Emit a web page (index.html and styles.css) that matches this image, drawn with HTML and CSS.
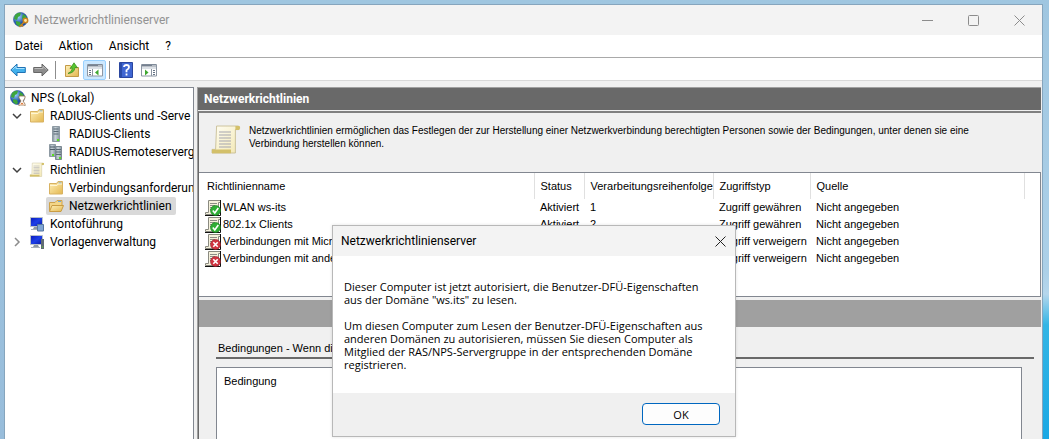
FILE: index.html
```html
<!DOCTYPE html>
<html lang="de">
<head>
<meta charset="utf-8">
<title>Netzwerkrichtlinienserver</title>
<link rel="stylesheet" href="styles.css">
</head>
<body>
<svg class="defs" aria-hidden="true">
  <defs>
    <linearGradient id="gold" x2="1" y2="1"><stop offset="0" stop-color="#fff0b8"/><stop offset="1" stop-color="#e3b750"/></linearGradient>
    <linearGradient id="paper" x2="1" y2="1"><stop offset="0" stop-color="#fffef4"/><stop offset="1" stop-color="#f3e8b4"/></linearGradient>
    <radialGradient id="sea" cx=".35" cy=".3"><stop offset="0" stop-color="#9fd4ff"/><stop offset="1" stop-color="#1c50a8"/></radialGradient>
    <linearGradient id="screen" x2="1" y2="1"><stop offset="0" stop-color="#0a18b8"/><stop offset=".5" stop-color="#1c3fe8"/><stop offset="1" stop-color="#0818a0"/></linearGradient>
    <linearGradient id="steel" x2="1"><stop offset="0" stop-color="#7d8d99"/><stop offset=".4" stop-color="#c9d2d8"/><stop offset="1" stop-color="#8796a1"/></linearGradient>
  </defs>
  <symbol id="globe" viewBox="0 0 16 16">
    <circle cx="7.5" cy="7.500" r="7" fill="url(#sea)" stroke="#28539a" stroke-width=".6"/>
    <path d="M2 3Q5 0 8 1L7 4 5 5 4 8 1 7ZM10 2l3 2 1 4-3 1-2-3ZM3 9l4 1 1 3-2 1.500L3 12Z" fill="#3ea63c"/>
  </symbol>
  <symbol id="folder" viewBox="0 0 16 16">
    <path d="M1.500 3.500h7l1.500-2h4.500v12.500h-13Z" fill="url(#gold)" stroke="#d8b262"/>
    <path d="M10.500 2.500h3v1h-3Z" fill="#6fa9dc"/><path d="M2 5.500h7l1-1.500h4" stroke="#fff6d4" fill="none"/>
  </symbol>
  <symbol id="folder-open" viewBox="0 0 16 16">
    <path d="M1.500 13V4.500h5.500l2-2h5V7" fill="#f3d688" stroke="#cfa24a"/><path d="M10 3.500h3" stroke="#6fa9dc"/>
    <path d="M1.500 13.500 4 7.500h11.500l-2.500 6Z" fill="url(#gold)" stroke="#c99c43"/>
  </symbol>
  <symbol id="scroll" viewBox="0 0 16 16">
    <path d="M3.300 1h11v1.800h-1.600v11.700H1v-1.800h1.800Z" fill="url(#paper)" stroke="#c3b88c" stroke-width=".4"/>
    <path d="M12.700 1h2.100q.7 1-.2 2h-1.900ZM1 12.800h9.500v1.800H1Z" fill="#d3c06a"/>
    <path d="M4.500 4h6M4.500 5.500h6M4.500 7h6M4.500 8.500h6M4.500 10h6M4.500 11.500h6" stroke="#a5a5ae" stroke-width=".5"/>
  </symbol>
  <symbol id="server" viewBox="0 0 16 16">
    <path d="M4.500.5h7v15h-7Z" fill="url(#steel)" stroke="#8e9aa3"/><path d="M5.500 3h5M5.500 5.500h5M5.500 8h5" stroke="#5b6a76"/><path d="M9 13h2v2H9Z" fill="#5cde20"/>
  </symbol>
  <symbol id="servers" viewBox="0 0 16 16">
    <path d="M1.500.5h6v12h-6Z" fill="url(#steel)" stroke="#8e9aa3"/><path d="M2 3h5M2 5.500h5" stroke="#4f5e6a"/>
    <path d="M7.500 2.500h6v13h-6Z" fill="url(#steel)" stroke="#7b8892"/><path d="M8 5.500h5M8 8h5M8 10.500h5" stroke="#5b6a76"/><path d="M4 10h2v2H4ZM11 13h2v2h-2Z" fill="#5cde20"/>
  </symbol>
  <symbol id="monitor" viewBox="0 0 16 16">
    <path d="M1.500 1.500h12v9h-12Z" fill="url(#screen)" stroke="#b9c1c9"/><path d="M5 11h4l1 2H4Z" fill="#8d98a3"/><path d="M2 13.500h9" stroke="#a8b2bb"/>
  </symbol>
  <symbol id="sheet" viewBox="0 0 16 16">
    <path d="M3.500.5h12v2h-2v12H.5v-2h3Z" fill="#f5f1dc" stroke="#8a8a80"/><path d="M5 3.500h7M5 5.500h5M5 7.500h3M5 9.500h2" stroke="#8c8c86"/><path d="M15.500 0v15.500H0" stroke="#111" fill="none"/>
  </symbol>
  <symbol id="sheet-ok" viewBox="0 0 16 16">
    <use href="#sheet"/><circle cx="10.500" cy="10.500" r="5" fill="#2fae35" stroke="#16801f" stroke-width=".6"/><path d="m7.800 10.500 2 2.500 3.500-5" stroke="#fff" stroke-width="1.600" fill="none"/>
  </symbol>
  <symbol id="sheet-no" viewBox="0 0 16 16">
    <use href="#sheet"/><circle cx="10.500" cy="10.500" r="5" fill="#cf3340" stroke="#962530" stroke-width=".6"/><path d="m8.300 8.300 4.400 4.400m0-4.400-4.400 4.400" stroke="#fff" stroke-width="1.600"/>
  </symbol>
  <symbol id="pane" viewBox="0 0 16 14">
    <path d="M.5 1.500h15v11.500H.5Z" fill="#fff" stroke="#8c96a3"/><path d="M1 2.500h14" stroke="#75808f" stroke-width="2"/><path d="M1 5h14" stroke="#bac3ce"/><path d="M11.500 2.500h1m1 0h1" stroke="#fff"/>
  </symbol>
</svg>

<main class="window">
  <header class="titlebar">
    <svg class="icon" aria-hidden="true"><use href="#globe"/><g fill="none" stroke="#c9841c" stroke-width="1.500"><circle cx="12.500" cy="8.500" r="2.200" fill="#ffe9a4"/><path d="m11 10-4.500 5m2-2 1.500 1.500"/></g></svg>
    <h1 class="title">Netzwerkrichtlinienserver</h1>
    <div class="controls">
      <button class="control" aria-label="Minimieren"><svg width="11" height="11"><path d="M0 5.500h11"/></svg></button>
      <button class="control" aria-label="Maximieren"><svg width="11" height="11"><rect x=".5" y=".5" width="10" height="10" rx="1"/></svg></button>
      <button class="control" aria-label="Schließen"><svg width="11" height="11"><path d="m.5.500 10 10m0-10-10 10"/></svg></button>
    </div>
  </header>
  <nav class="menubar">
    <button class="menu">Datei</button><button class="menu">Aktion</button><button class="menu">Ansicht</button><button class="menu">?</button>
  </nav>
  <div class="toolbar">
    <button class="tool" aria-label="Zurück"><svg width="16" height="14"><path d="M.8 7 7 1v3.500h8.300v5H7V13Z" fill="#43b1ec" stroke="#2072b4"/><path d="M2.500 6.500 6 3.200v2.300h8.500" fill="none" stroke="#a4e0ff"/></svg></button>
    <button class="tool" aria-label="Vorwärts"><svg width="16" height="14"><path d="M15.200 7 9 1v3.500H.7v5H9V13Z" fill="#8d8d8d" stroke="#666"/><path d="M1.500 5.500H10V3.300L13.500 6.500" fill="none" stroke="#bbb"/></svg></button>
    <span class="divider"></span>
    <button class="tool" aria-label="Eine Ebene nach oben"><svg width="16" height="16"><path d="M1.500 14.500v-11h5l1.500 2h6.500v9Z" fill="url(#gold)" stroke="#c39a46"/><path d="M4 11.500Q8 10 8.500 6L6 6.500 10 .8l3.500 5L11 5.500Q10.500 11 4 11.500Z" fill="#58c62e" stroke="#35891d" stroke-width=".7"/></svg></button>
    <button class="tool active" aria-label="Konsolenstruktur anzeigen"><svg width="16" height="14"><use href="#pane"/><path d="M5.500 6v7" stroke="#8c96a3"/><path d="M2 7.500h2M2 9.500h2M2 11.500h2" stroke="#657486"/><path d="M11.500 6.500v6L8 9.500Z" fill="#3fa831"/></svg></button>
    <span class="divider"></span>
    <button class="tool" aria-label="Hilfe"><svg width="14" height="16"><path d="M.5.500h13v15H.5Z" fill="#3f66d2" stroke="#2a469f"/><path d="M2 1v14" stroke="#16307f"/><path d="M5 5q0-2 2.500-2T10 5.300Q10 7 7.500 8.200v2M7.500 11.500v2" stroke="#fff" stroke-width="1.800" fill="none"/></svg></button>
    <button class="tool" aria-label="Aktionsbereich anzeigen"><svg width="16" height="14"><use href="#pane"/><path d="M10.500 6v7" stroke="#8c96a3"/><path d="M12 7.500h2M12 9.500h2M12 11.500h2" stroke="#657486"/><path d="M4 6.500v6l3.500-3Z" fill="#3fa831"/></svg></button>
  </div>

  <div class="workspace">
    <aside class="tree-pane">
      <ul class="tree">
        <li class="node root"><svg class="icon" aria-hidden="true"><use href="#globe"/><path d="M9 6h6v2l-2 3 2 3v2H9v-2l2-3-2-3Z" fill="#fff" stroke="#93724d" stroke-width=".8"/><path d="M10 14.500h4l-2-2Z" fill="#d86c24"/></svg><span class="label">NPS (Lokal)</span></li>
        <li class="node"><svg class="chevron open" aria-hidden="true"><path d="m1 3 4 4 4-4"/></svg><svg class="icon" aria-hidden="true"><use href="#folder"/></svg><span class="label">RADIUS-Clients und -Serve</span></li>
        <li class="node child"><svg class="icon" aria-hidden="true"><use href="#server"/></svg><span class="label">RADIUS-Clients</span></li>
        <li class="node child"><svg class="icon" aria-hidden="true"><use href="#servers"/></svg><span class="label">RADIUS-Remoteserverg</span></li>
        <li class="node"><svg class="chevron open" aria-hidden="true"><path d="m1 3 4 4 4-4"/></svg><svg class="icon" aria-hidden="true"><use href="#scroll"/></svg><span class="label">Richtlinien</span></li>
        <li class="node child"><svg class="icon" aria-hidden="true"><use href="#folder"/></svg><span class="label">Verbindungsanforderun</span></li>
        <li class="node child"><span class="selected"><svg class="icon" aria-hidden="true"><use href="#folder-open"/></svg><span class="label">Netzwerkrichtlinien</span></span></li>
        <li class="node"><span class="chevron"></span><svg class="icon" aria-hidden="true"><use href="#monitor"/><path d="M8.500 8.500h6v6.500h-6Z" fill="#7fa5d4" stroke="#56779f"/></svg><span class="label">Kontoführung</span></li>
        <li class="node"><svg class="chevron" aria-hidden="true"><path d="m3 1 4 4-4 4"/></svg><svg class="icon" aria-hidden="true"><use href="#monitor"/><path d="M12 5h3v10h-3Z" fill="#606b75"/><path d="M13 13h1" stroke="#5cde20"/></svg><span class="label">Vorlagenverwaltung</span></li>
      </ul>
    </aside>

    <section class="detail">
      <h2 class="detail-title">Netzwerkrichtlinien</h2>
      <div class="detail-body">
        <div class="intro">
          <svg class="intro-icon" viewBox="0 0 16 16" aria-hidden="true"><use href="#scroll"/></svg>
          <p class="intro-text">Netzwerkrichtlinien ermöglichen das Festlegen der zur Herstellung einer Netzwerkverbindung berechtigten Personen sowie der Bedingungen, unter denen sie eine Verbindung herstellen können.</p>
        </div>
        <div class="list">
          <table class="policies">
            <colgroup><col class="col-name"><col class="col-status"><col class="col-order"><col class="col-access"><col class="col-source"><col></colgroup>
            <thead><tr><th>Richtlinienname</th><th>Status</th><th>Verarbeitungsreihenfolge</th><th>Zugriffstyp</th><th>Quelle</th><td></td></tr></thead>
            <tbody>
              <tr><td class="name"><svg class="icon" aria-hidden="true"><use href="#sheet-ok"/></svg>WLAN ws-its</td><td>Aktiviert</td><td>1</td><td>Zugriff gewähren</td><td>Nicht angegeben</td><td></td></tr>
              <tr><td class="name"><svg class="icon" aria-hidden="true"><use href="#sheet-ok"/></svg>802.1x Clients</td><td>Aktiviert</td><td>2</td><td>Zugriff gewähren</td><td>Nicht angegeben</td><td></td></tr>
              <tr><td class="name"><svg class="icon" aria-hidden="true"><use href="#sheet-no"/></svg>Verbindungen mit Micro</td><td></td><td></td><td>Zugriff verweigern</td><td>Nicht angegeben</td><td></td></tr>
              <tr><td class="name"><svg class="icon" aria-hidden="true"><use href="#sheet-no"/></svg>Verbindungen mit ander</td><td></td><td></td><td>Zugriff verweigern</td><td>Nicht angegeben</td><td></td></tr>
            </tbody>
          </table>
        </div>
        <div class="band"></div>
        <div class="conditions">
          <h3 class="conditions-title">Bedingungen - Wenn die</h3>
          <div class="conditions-list">Bedingung</div>
        </div>
      </div>
    </section>
  </div>
</main>

<section class="dialog" role="dialog" aria-labelledby="dialog-title">
  <header class="dialog-head">
    <h2 class="dialog-title" id="dialog-title">Netzwerkrichtlinienserver</h2>
    <button class="dialog-close" aria-label="Schließen"><svg width="11" height="11"><path d="m.5.500 10 10m0-10-10 10"/></svg></button>
  </header>
  <div class="dialog-body">
    <p>Dieser Computer ist jetzt autorisiert, die Benutzer-DFÜ-Eigenschaften<br>aus der Domäne "ws.its" zu lesen.</p>
    <p>Um diesen Computer zum Lesen der Benutzer-DFÜ-Eigenschaften aus<br>anderen Domänen zu autorisieren, müssen Sie diesen Computer als<br>Mitglied der RAS/NPS-Servergruppe in der entsprechenden Domäne<br>registrieren.</p>
  </div>
  <footer class="dialog-foot"><button class="ok">OK</button></footer>
</section>
</body>
</html>
```
FILE: styles.css
```css
* { box-sizing: border-box; }
html, body { height: 100%; }
body {
  margin: 0;
  padding: 4px 6px 0 4px;
  position: relative;
  overflow: hidden;
  background:
    linear-gradient(#9fc6e0, #98bddb) left / 50% 100% no-repeat,
    linear-gradient(#9fc6e0 0, #acd0e8 62%, #b5d6ec 67%, #33b5e5 74%, #1ba8e4 100%);
  color: #000;
  font: 12px/18px Roboto, "Open Sans", sans-serif;
}
h1, h2, h3, p, ul { margin: 0; padding: 0; font-size: 12px; font-weight: 400; }
button { font: inherit; color: inherit; border: 0; background: none; padding: 0; }
svg { display: block; flex: none; }
.defs { position: absolute; width: 0; height: 0; }
.icon { width: 16px; height: 16px; flex: none; }

.window {
  height: 100%;
  display: flex;
  flex-direction: column;
  border: 1px solid #86a5bd;
  border-bottom: 0;
  background: #f0f0f0;
}
.titlebar { display: flex; align-items: center; height: 30px; flex: none; padding-left: 8px; background: #f3f3f3; }
.title { margin-left: 5px; color: #929292; }
.controls { display: flex; margin-left: auto; }
.control { width: 46px; height: 29px; display: grid; place-items: center; }
.control svg { fill: none; stroke: #8c8c8c; }
.menubar { display: flex; height: 23px; flex: none; padding-left: 10px; gap: 16px; background: #fff; border-bottom: 1px solid #a9a9a9; }
.menubar .menu { height: 22px; }
.toolbar { display: flex; align-items: center; height: 23px; flex: none; padding: 2px 0 0 1px; background: #fff; border-bottom: 1px solid #d8d8d8; }
.tool { width: 23px; height: 20px; display: grid; place-items: center; }
.tool.active { background: #cce8ff; border: 1px solid #99d1ff; border-radius: 2px; }
.divider { width: 1px; height: 18px; margin: 0 4px 0 3px; background: #8d8d8d; }

.workspace { flex: 1; min-height: 0; display: grid; grid-template-columns: 189px 1fr; gap: 3px; padding: 6px 1px 0 0; }
.tree-pane { border: 1px solid #828790; border-left: 0; border-bottom: 0; background: #fff; overflow: hidden; padding-top: 1px; }
.tree { list-style: none; }
.node { display: flex; align-items: center; height: 18px; padding-left: 7px; white-space: nowrap; }
.root { padding-left: 5px; }
.child { padding-left: 43px; }
.label { margin-left: 5px; }
.chevron { width: 10px; height: 10px; margin-right: 7px; fill: none; stroke: #8c8c8c; stroke-width: 1.5; flex: none; }
.chevron.open { stroke: #404040; }
.selected { display: flex; align-items: center; height: 18px; margin-left: -2px; padding: 0 4px 0 2px; background: #d9d9d9; border-radius: 2px; }

.detail { min-width: 0; display: flex; flex-direction: column; border-left: 1px solid #a0a0a0; font: 11px/13px "Liberation Sans", Arial, sans-serif; }
.detail-title { height: 23px; flex: none; padding-left: 6px; background: #696969; border-top: 1px solid #a0a0a0; color: #fff; font: bold 12px/22px Roboto, "Open Sans", sans-serif; }
.detail-body { flex: 1; min-height: 0; display: flex; flex-direction: column; margin-top: 1px; border-left: 1px solid #696969; border-top: 2px solid #808080; }
.intro { display: flex; height: 59px; flex: none; padding: 11px 40px 0 11px; }
.intro-icon { width: 32px; height: 32px; }
.intro-text { margin-left: 7px; font-size: 10px; }
.list { height: 125px; flex: none; border: 1px solid #828790; border-left: 0; background: #fff; }
.policies { width: 100%; table-layout: fixed; border-collapse: collapse; }
.policies th, .policies td { height: 17px; padding: 0 0 0 6px; font-weight: 400; text-align: left; white-space: nowrap; }
.policies th { height: 26px; border-right: 1px solid #e0e0e0; }
.policies th:first-child { padding-left: 8px; }
.col-name { width: 335px; }
.col-status { width: 50px; }
.col-order { width: 129px; }
.col-access { width: 97px; }
.col-source { width: 214px; }
.policies .name { display: flex; align-items: center; gap: 2px; }
.band { height: 27px; flex: none; margin-top: 3px; background: #a0a0a0; }
.conditions { flex: 1; min-height: 0; display: flex; flex-direction: column; padding: 15px 7px 0 17px; }
.conditions-title { flex: none; padding: 0 0 2px 2px; border-bottom: 2px solid #696969; font: inherit; }
.conditions-list { flex: 1; margin: 8px 12px 0 0; padding: 7px; border: 1px solid #828790; border-bottom: 0; background: #fff; }

.dialog { position: absolute; left: 332px; top: 225px; width: 404px; border: 1px solid #b8b8b8; background: #fff; box-shadow: 0 0 3px rgba(0, 0, 0, .12); }
.dialog-head { display: flex; align-items: center; justify-content: space-between; height: 30px; padding: 0 4px 0 8px; background: #f3f3f3; }
.dialog-close { width: 22px; height: 22px; display: grid; place-items: center; }
.dialog-close svg { stroke: #222; }
.dialog-body { display: grid; gap: 13px; padding: 24px 11px 22px; font: 11px/13px "Open Sans", "Noto Sans", sans-serif; }
.dialog-body p { font-size: inherit; white-space: nowrap; }
.dialog-foot { display: flex; justify-content: flex-end; padding: 10px 15px 11px; background: #f0f0f0; }
.ok { width: 78px; height: 22px; border: 1px solid #0067c0; border-radius: 4px; background: #fdfdfd; font: 11px "Open Sans", "Noto Sans", sans-serif; }
```
